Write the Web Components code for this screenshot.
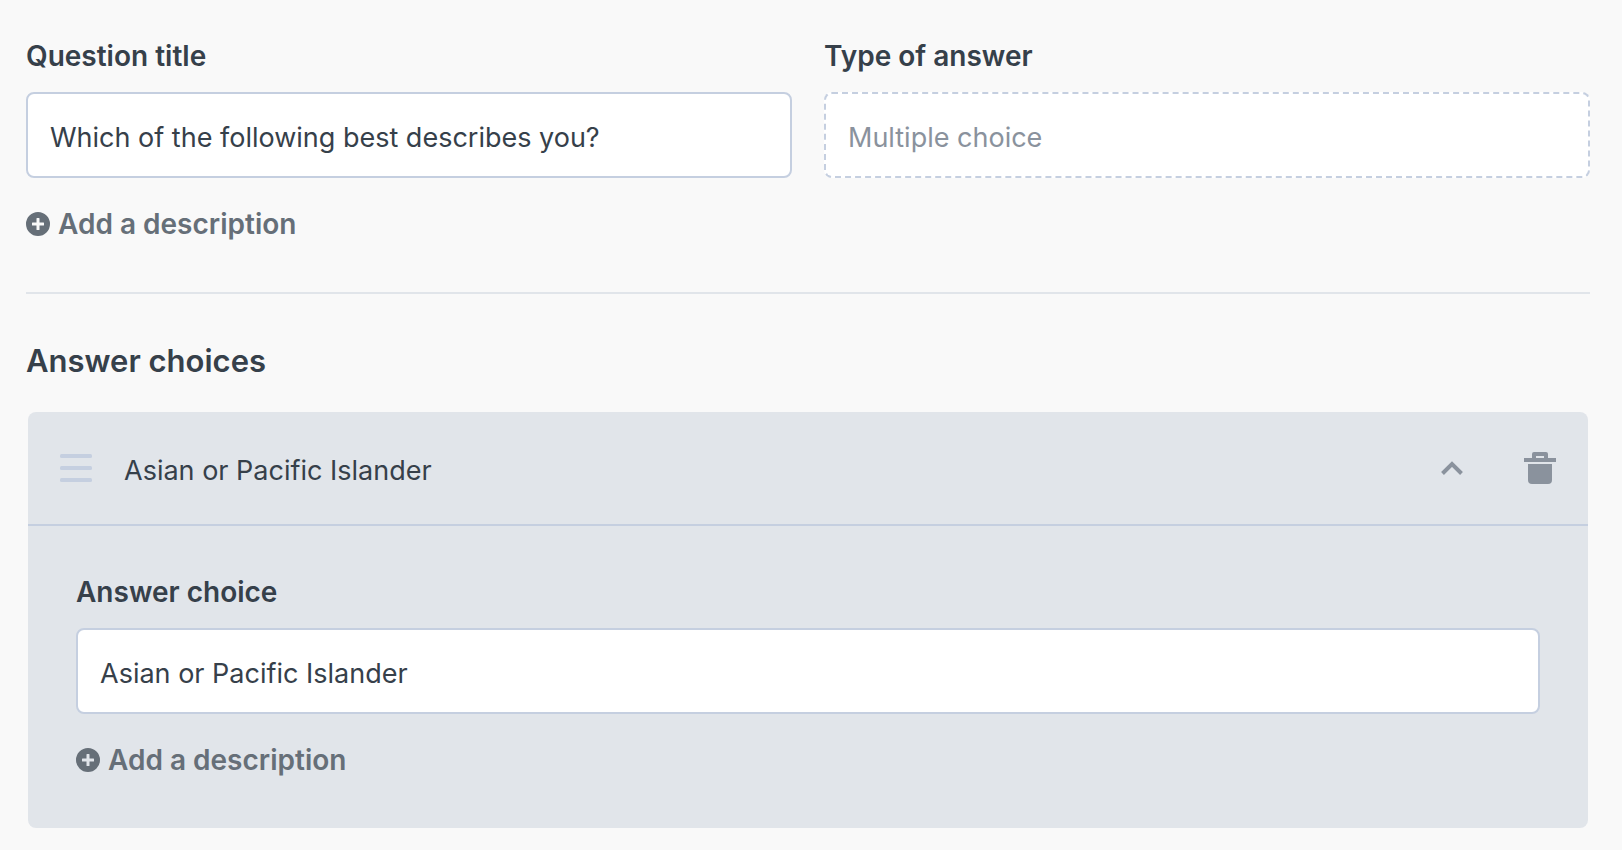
<!DOCTYPE html>
<html lang="en">
<head>
<meta charset="utf-8">
<meta name="viewport" content="width=device-width, initial-scale=1">
<title>Edit question</title>
<style>
  body {
    margin: 0;
    background: #f9f9f9;
    color: #36404a;
    font: 400 27px/40px Inter, "Liberation Sans", sans-serif;
    --label-size: 28px;
    --line: #c5cfe0;
    --panel: #e1e5ea;
    --muted: #8a929d;
    --action: #666f78;
  }
</style>
</head>
<body>
<question-editor>
  <text-field slot="title" label="Question title" value="Which of the following best describes you?"></text-field>
  <text-field slot="type" label="Type of answer" value="Multiple choice" disabled></text-field>
  <add-button slot="description">Add a description</add-button>
  <span slot="heading">Answer choices</span>
  <answer-card name="Asian or Pacific Islander">
    <text-field label="Answer choice" value="Asian or Pacific Islander"></text-field>
    <add-button>Add a description</add-button>
  </answer-card>
</question-editor>

<script>
class BaseElement extends HTMLElement {
  connectedCallback() {
    if (this.shadowRoot) return;
    const t = document.createElement('template');
    t.innerHTML = '<style>*{box-sizing:border-box}:host{display:block}</style>' + this.constructor.markup;
    this.attachShadow({ mode: 'open' }).append(t.content.cloneNode(true));
    this.setup(this.shadowRoot);
  }
  setup() {}
}

class TextField extends BaseElement {
  static markup = `
    <style>
      label { display: block; margin-bottom: 16px; font-size: var(--label-size); font-weight: 600; }
      input {
        display: block; width: 100%; height: 86px; margin: 0; padding: 4px 22px 0;
        border: 2px solid var(--line); border-radius: 8px;
        background: #fff; color: inherit; font: inherit; outline: none;
      }
      input:focus { border-color: var(--muted); }
      input:disabled { border-style: dashed; color: var(--muted); opacity: 1; }
    </style>
    <label for="field"></label>
    <input id="field" type="text">`;
  setup(root) {
    root.querySelector('label').textContent = this.getAttribute('label');
    const input = root.querySelector('input');
    input.value = this.getAttribute('value');
    input.disabled = this.hasAttribute('disabled');
  }
}

class AddButton extends BaseElement {
  static markup = `
    <style>
      :host { margin-top: 26px; }
      button {
        display: flex; align-items: center; gap: 8px; margin: 0; padding: 0; border: 0;
        background: none; color: var(--action); font: inherit;
        font-size: var(--label-size); font-weight: 600; cursor: pointer;
      }
      svg { display: block; flex: none; }
    </style>
    <button type="button">
      <svg width="24" height="24" viewBox="0 0 24 24" aria-hidden="true">
        <path fill="currentColor" fill-rule="evenodd" d="M12 0a12 12 0 1 0 0 24a12 12 0 1 0 0-24zM11 6h2q.5 0 .5.5v4h4q.5 0 .5.5v2q0 .5-.5.5h-4v4q0 .5-.5.5h-2q-.5 0-.5-.5v-4h-4q-.5 0-.5-.5v-2q0-.5.5-.5h4v-4q0-.5.5-.5z"/>
      </svg>
      <span><slot></slot></span>
    </button>`;
}

class AnswerCard extends BaseElement {
  static markup = `
    <style>
      :host { border-radius: 8px; background: var(--panel); }
      header {
        display: flex; align-items: center; height: 114px; padding: 0 32px;
        border-bottom: 2px solid var(--line);
      }
      .name { flex: 1; padding: 6px 32px 0; }
      button {
        display: flex; padding: 0; margin: 0; border: 0; background: none;
        color: var(--muted); cursor: pointer;
      }
      .drag { color: var(--line); cursor: grab; }
      .remove { margin-left: 56px; }
      .body { padding: 46px 48px 48px; }
      .body[hidden] { display: none; }
      svg { display: block; }
    </style>
    <header>
      <button class="drag" type="button" aria-label="Reorder">
        <svg width="32" height="32" viewBox="0 0 32 32" fill="currentColor">
          <rect y="2" width="32" height="4" rx="1.5"/><rect y="14" width="32" height="4" rx="1.5"/><rect y="26" width="32" height="4" rx="1.5"/>
        </svg>
      </button>
      <span class="name"></span>
      <button class="toggle" type="button" aria-label="Collapse" aria-expanded="true">
        <svg width="32" height="32" viewBox="0 0 32 32" fill="none" stroke="currentColor" stroke-width="4">
          <path d="M6.500 21.500L16 12L25.500 21.500"/>
        </svg>
      </button>
      <button class="remove" type="button" aria-label="Delete">
        <svg width="32" height="32" viewBox="0 0 32 32" fill="currentColor" fill-rule="evenodd">
          <path d="M0 6h8V2q0-2 2-2h12q2 0 2 2v4h8v4H0zM12 4v2h8V4z"/>
          <path d="M4 12h24v16q0 4-4 4H8q-4 0-4-4z"/>
        </svg>
      </button>
    </header>
    <div class="body"><slot></slot></div>`;
  setup(root) {
    root.querySelector('.name').textContent = this.getAttribute('name');
    const toggle = root.querySelector('.toggle');
    const body = root.querySelector('.body');
    toggle.addEventListener('click', () => {
      body.hidden = !body.hidden;
      toggle.setAttribute('aria-expanded', String(!body.hidden));
    });
    root.querySelector('.remove').addEventListener('click', () => this.remove());
  }
}

class QuestionEditor extends BaseElement {
  static markup = `
    <style>
      :host { padding: 36px 32px 22px 26px; }
      .fields { display: grid; grid-template-columns: 1fr 1fr; column-gap: 32px; }
      hr { height: 2px; margin: 48px 0 44px; border: 0; background: var(--panel); }
      h2 { margin: 0 0 28px; font-size: 31px; line-height: 46px; font-weight: 600; }
      .answers { padding: 0 2px; }
    </style>
    <section class="fields">
      <div><slot name="title"></slot><slot name="description"></slot></div>
      <div><slot name="type"></slot></div>
    </section>
    <hr>
    <h2><slot name="heading"></slot></h2>
    <section class="answers"><slot></slot></section>`;
}

customElements.define('text-field', TextField);
customElements.define('add-button', AddButton);
customElements.define('answer-card', AnswerCard);
customElements.define('question-editor', QuestionEditor);
</script>
</body>
</html>
